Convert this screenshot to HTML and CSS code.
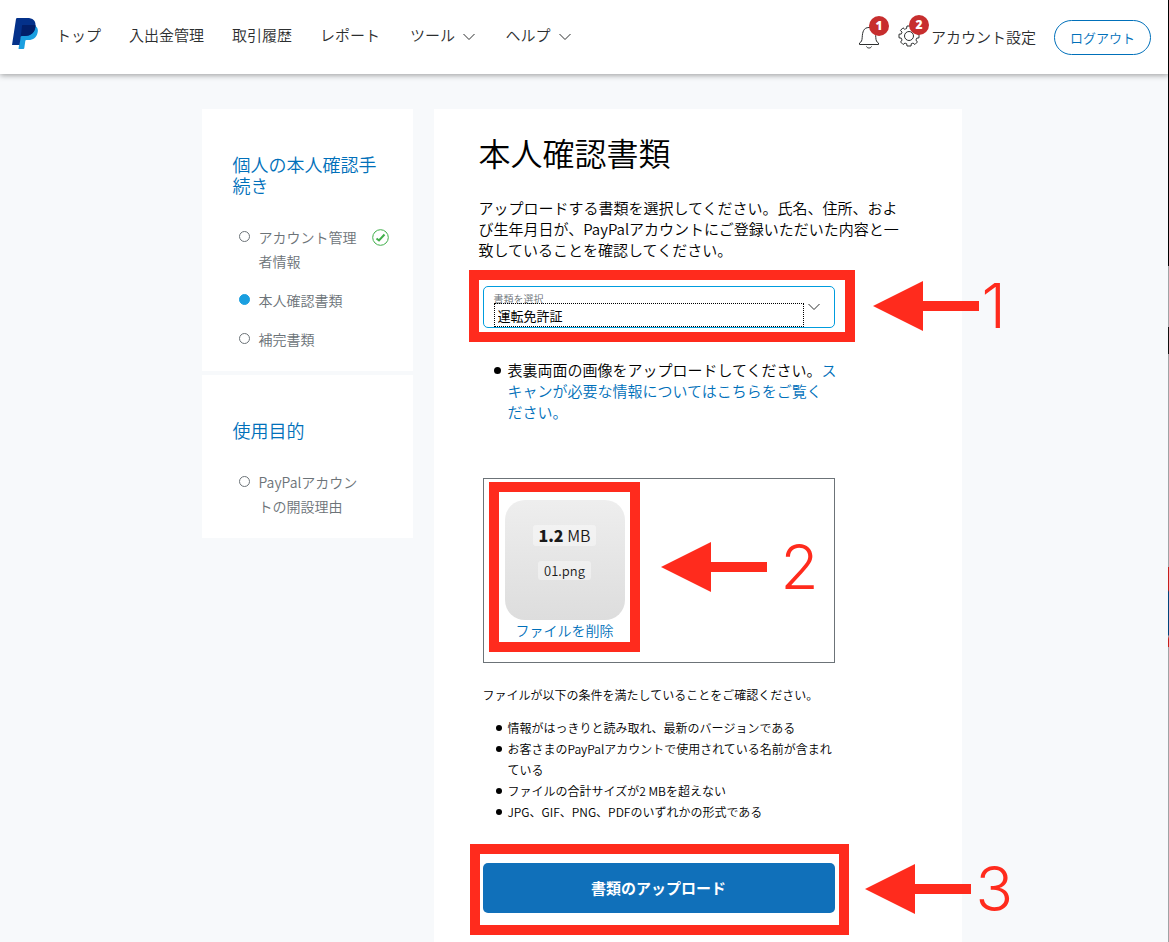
FILE: index.html
```html
<!DOCTYPE html>
<html lang="ja">
<head>
    <meta charset="UTF-8">
    <meta name="viewport" content="width=device-width, initial-scale=1.0">
    <title>本人確認書類 - PayPal</title>
    <link rel="stylesheet" href="styles.css">
</head>
<body>
    <header class="header">
        <a href="#" class="logo" aria-label="PayPal">
            <svg width="26" height="31" viewBox="0 0 26 31">
                <path fill="#1a9fe0" d="M23.5 8c2.300 1.500 2.800 4 2 7-1.100 4.700-4.300 7-9 7h-2.200c-.6 0-.9.300-1 .9l-1 7.100c-.1.600-.4 1-1 1H6.500l1.300-9L10 8z"/>
                <path fill="#04318a" d="M4 1c.1-.7.500-1 1.200-1h9.800c5.800 0 9 2.600 8.500 8-.7 6.700-4.500 10-11 10H10c-.8 0-1.200.300-1.300 1l-1.200 8H0z"/>
                <path fill="#021f69" d="M10.200 7h13.300c.2 6.800-4 11-11 11H10c-.8 0-1.200.300-1.300 1l-.5 3.500L10 8.500z"/>
            </svg>
        </a>
        <nav class="nav">
            <a href="#">トップ</a>
            <a href="#">入出金管理</a>
            <a href="#">取引履歴</a>
            <a href="#">レポート</a>
            <a href="#" class="menu">ツール <svg class="chevron" width="12" height="8" viewBox="0 0 12 8"><path d="M.5 1l5.500 5.500L11.500 1"/></svg></a>
            <a href="#" class="menu">ヘルプ <svg class="chevron" width="12" height="8" viewBox="0 0 12 8"><path d="M.5 1l5.500 5.500L11.500 1"/></svg></a>
        </nav>
        <div class="account">
            <a href="#" class="icon-link" aria-label="通知">
                <svg width="22" height="24" viewBox="0 0 22 24">
                    <path d="M1.500 19.500h19M1.500 19.500v-1.500c2-1 2.500-2.500 2.700-5.500.3-5.500 1.300-10 6.800-10s6.500 4.500 6.800 10c.2 3 .7 4.500 2.700 5.500v1.500M8.500 21.500c.8 2 4.200 2 5 0"/>
                </svg>
                <span class="badge">1</span>
            </a>
            <a href="#" class="icon-link settings">
                <svg width="22" height="24" viewBox="-11 -12 22 24">
                    <circle r="4.500"/>
                    <path d="M-2-10 L2-10 L2.500-7.400 Q3.500-7.200 4.200-6.600 L6-8.200 L8.500-5.600 L7-3.800 Q7.600-2.900 7.700-2 L10-1.800 L10 1.800 L7.700 2.200 Q7.400 3.200 6.900 4 L8.400 6 L5.900 8.500 L4 7 Q3.200 7.500 2.300 7.700 L2 10 L-2 10 L-2.300 7.700 Q-3.200 7.500 -4 7 L-5.900 8.500 L-8.400 6 L-6.900 4 Q-7.400 3.200 -7.700 2.200 L-10 1.800 L-10-1.800 L-7.700-2 Q-7.600-2.900 -7-3.800 L-8.500-5.600 L-6-8.200 L-4.200-6.600 Q-3.500-7.200 -2.500-7.400 Z"/>
                </svg>
                <span class="badge">2</span>
                <span>アカウント設定</span>
            </a>
            <button type="button" class="logout">ログアウト</button>
        </div>
    </header>

    <div class="page">
        <aside class="sidebar">
            <section class="card">
                <h2>個人の本人確認手続き</h2>
                <ul class="steps">
                    <li>
                        <a href="#">アカウント管理者情報</a>
                        <svg class="check" width="17" height="17" viewBox="0 0 17 17"><circle cx="8.500" cy="8.500" r="7.800"/><path d="M4.500 9.500l2.500 2 5.500-6"/></svg>
                    </li>
                    <li class="current"><a href="#">本人確認書類</a></li>
                    <li><a href="#">補完書類</a></li>
                </ul>
            </section>
            <section class="card">
                <h2>使用目的</h2>
                <ul class="steps">
                    <li><a href="#">PayPalアカウントの開設理由</a></li>
                </ul>
            </section>
        </aside>

        <main class="main">
            <h1>本人確認書類</h1>
            <p class="lead">アップロードする書類を選択してください。氏名、住所、および生年月日が、PayPalアカウントにご登録いただいた内容と一致していることを確認してください。</p>

            <form class="form">
                <div class="target">
                    <div class="field">
                        <label for="docType">書類を選択</label>
                        <select id="docType">
                            <option>運転免許証</option>
                        </select>
                        <svg class="chevron" width="12" height="8" viewBox="0 0 12 8"><path d="M.5 1l5.500 5.500L11.500 1"/></svg>
                    </div>
                    <div class="highlight highlight-select"></div>
                    <div class="callout callout-select">
                        <svg width="106" height="50" viewBox="0 0 106 50"><path d="M0 25L50 0v20h56v10H50v20z"/></svg>
                        <span>1</span>
                    </div>
                </div>

                <ul class="notes">
                    <li>表裏両面の画像をアップロードしてください。<a href="#">ス<br>キャンが必要な情報についてはこちらをご覧く<br>ださい。</a></li>
                </ul>

                <div class="dropzone target">
                    <div class="file">
                        <div class="thumb">
                            <span class="size"><b>1.2</b> MB</span>
                            <span class="name">01.png</span>
                        </div>
                        <a href="#">ファイルを削除</a>
                    </div>
                    <div class="highlight highlight-file"></div>
                    <div class="callout callout-file">
                        <svg width="106" height="50" viewBox="0 0 106 50"><path d="M0 25L50 0v20h56v10H50v20z"/></svg>
                        <span>2</span>
                    </div>
                </div>

                <p class="conditions">ファイルが以下の条件を満たしていることをご確認ください。</p>
                <ul class="notes small">
                    <li>情報がはっきりと読み取れ、最新のバージョンである</li>
                    <li>お客さまのPayPalアカウントで使用されている名前が含まれている</li>
                    <li>ファイルの合計サイズが2 MBを超えない</li>
                    <li>JPG、GIF、PNG、PDFのいずれかの形式である</li>
                </ul>

                <div class="target">
                    <button type="button" class="upload">書類のアップロード</button>
                    <div class="highlight highlight-upload"></div>
                    <div class="callout callout-upload">
                        <svg width="106" height="50" viewBox="0 0 106 50"><path d="M0 25L50 0v20h56v10H50v20z"/></svg>
                        <span>3</span>
                    </div>
                </div>
            </form>
        </main>
    </div>
</body>
</html>
```
FILE: styles.css
```css
* {
    box-sizing: border-box;
}
body {
    margin: 0;
    min-height: 100vh;
    display: flex;
    flex-direction: column;
    position: relative;
    font-family: "Noto Sans CJK JP", sans-serif;
    font-weight: 350;
    font-size: 15px;
    line-height: 21px;
    color: #000;
    background-color: #f7f9fb;
}
/* window edge on the right side */
body::after {
    content: "";
    position: absolute;
    top: 0;
    right: 0;
    bottom: 0;
    width: 1px;
    background: linear-gradient(#000 266px, #a0a2a4 266px, #a0a2a4 327px, #111 327px, #111 354px, #a0a2a4 354px, #a0a2a4 567px, #c4201c 567px, #c4201c 590px, #00457c 592px, #00457c 635px, #a0a2a4 636px, #c4201c 639px, #c4201c 647px, #a0a2a4 647px);
}
h1, h2, p, ul {
    margin: 0;
    padding: 0;
    font-weight: 350;
}
a {
    color: #0070ba;
    text-decoration: none;
}
button, select {
    font-family: inherit;
    cursor: pointer;
}
.chevron {
    fill: none;
    stroke: #2c2e2f;
}

.header {
    position: relative;
    display: flex;
    align-items: center;
    height: 74px;
    padding: 0 18px 0 12px;
    background-color: #fff;
    box-shadow: 0 1px 6px rgba(0, 0, 0, 0.4);
}
.logo {
    display: flex;
    margin: 0 18px 8px 0;
}
.nav {
    display: flex;
    gap: 28px;
    padding-bottom: 6px;
}
.nav a, .account a {
    color: #2c2e2f;
}
.nav .menu {
    margin-left: 2px;
}
.nav .chevron {
    margin-left: 5px;
}
.account {
    display: flex;
    align-items: center;
    gap: 18px;
    margin-left: auto;
}
.icon-link {
    position: relative;
    display: flex;
    align-items: center;
}
.icon-link svg {
    fill: none;
    stroke: #2c2e2f;
}
.settings {
    gap: 11px;
    padding-bottom: 2px;
}
.badge {
    position: absolute;
    left: 11px;
    top: -9px;
    width: 20px;
    height: 20px;
    border-radius: 50%;
    background-color: #c72e2e;
    color: #fff;
    font-family: "Open Sans", sans-serif;
    font-size: 12px;
    font-weight: 800;
    line-height: 20px;
    text-align: center;
}
.logout {
    height: 35px;
    padding: 0 15px;
    border: 1px solid #0070ba;
    border-radius: 18px;
    background: none;
    color: #0070ba;
    font-size: 13px;
    font-weight: 350;
}

.page {
    flex: 1;
    display: grid;
    grid-template-columns: 211px 528px;
    column-gap: 21px;
    width: 100%;
    max-width: 766px;
    margin: 35px auto 0;
}
.card {
    margin-bottom: 4px;
    padding: 45px 24px 20px 31px;
    background-color: #fff;
}
.card h2 {
    margin-bottom: 29px;
    color: #0070ba;
    font-size: 18px;
    line-height: 21px;
}
.steps {
    display: flex;
    flex-direction: column;
    gap: 15px;
    list-style: none;
}
.steps li {
    display: flex;
    font-size: 14px;
    line-height: 24px;
}
.steps li::before {
    content: "";
    flex: none;
    width: 9px;
    height: 9px;
    margin: 6px 9px 0 6px;
    border: 1px solid #6c7378;
    border-radius: 50%;
}
.steps .current::before {
    border-color: #1a9fe0;
    background-color: #1a9fe0;
}
.steps a {
    width: 100px;
    color: #6c7378;
}
.check {
    margin: 4px 0 0 auto;
    fill: none;
    stroke: #3fae49;
}
.check path {
    stroke-width: 2;
}

.main {
    padding: 23px 45px 29px;
    background-color: #fff;
}
h1 {
    font-size: 32px;
    line-height: 40px;
}
.lead {
    width: 424px;
    margin: 25px 0 26px;
}
.form {
    width: 352px;
    margin-left: 4px;
}
.target {
    position: relative;
}
.field {
    display: grid;
    grid-template-columns: 310px 1fr;
    padding: 7px 0 0 10px;
    border: 1px solid #009cde;
    border-radius: 5px;
}
.field label {
    grid-column: 1 / 3;
    color: #6c7378;
    font-size: 10px;
    line-height: 9px;
}
.field select {
    height: 24px;
    padding: 0 3px;
    border: 1px dotted #000;
    appearance: none;
    background: none;
    color: #000;
    font-size: 13px;
}
.field .chevron {
    margin-left: 4px;
}
.notes {
    margin: 31px -8px 56px 0;
    list-style: none;
}
.notes li {
    position: relative;
    padding-left: 25px;
}
.notes li::before {
    content: "";
    position: absolute;
    left: 11px;
    top: 8px;
    width: 7px;
    height: 7px;
    border-radius: 50%;
    background-color: #000;
}
.notes.small {
    margin: 12px 0 41px;
}
.small, .conditions {
    font-size: 12px;
}
.notes.small li::before {
    left: 13px;
    width: 6px;
    height: 6px;
}
.dropzone {
    padding: 21px;
    border: 1px solid #6c7378;
}
.file {
    width: 120px;
    font-size: 14px;
    text-align: center;
}
.thumb {
    display: flex;
    flex-direction: column;
    align-items: center;
    gap: 15px;
    height: 120px;
    padding-top: 25px;
    border-radius: 20px;
    background: linear-gradient(#eee, #ddd);
}
.thumb span {
    border-radius: 3px;
    background-color: rgba(255, 255, 255, 0.4);
    color: #1a1a1a;
}
.thumb .size {
    padding: 0 6px;
    font-size: 16px;
}
.thumb b {
    font-weight: 900;
}
.thumb .name {
    padding: 0 6px;
    font-size: 13px;
    line-height: 19px;
}
.conditions {
    margin-top: 21px;
}
.upload {
    display: block;
    width: 100%;
    height: 50px;
    padding: 0 0 2px;
    border: none;
    border-radius: 5px;
    background-color: #1070ba;
    color: #fff;
    font-size: 15px;
    font-weight: 700;
}

/* numbered guide marks */
.highlight {
    position: absolute;
    border: 10px solid #ff2b1d;
    pointer-events: none;
}
.highlight-select {
    inset: -16px -20px -14px -14px;
}
.highlight-file {
    top: 3px;
    left: 5px;
    width: 151px;
    height: 170px;
}
.highlight-upload {
    inset: -19px -14px -22px -13px;
}
.callout {
    position: absolute;
    display: flex;
    align-items: center;
    color: #ff2b1d;
    font-family: Inter, sans-serif;
    font-size: 62px;
    font-weight: 300;
    line-height: 50px;
    pointer-events: none;
}
.callout svg {
    fill: currentColor;
}
.callout-select {
    left: 390px;
    top: -5px;
    gap: 3px;
}
.callout-file {
    left: 177px;
    top: 63px;
    gap: 14px;
}
.callout-upload {
    left: 382px;
    top: 1px;
    gap: 5px;
}
```
